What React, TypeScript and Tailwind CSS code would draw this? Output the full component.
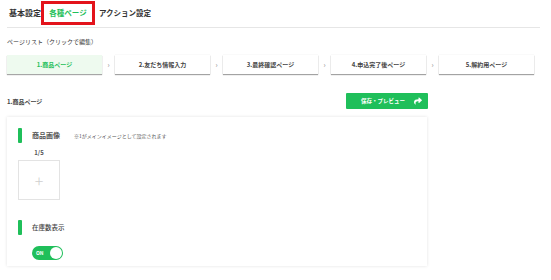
import { FaShare } from "react-icons/fa";

const steps = ["1.商品ページ", "2.友だち情報入力", "3.最終確認ページ", "4.申込完了後ページ", "5.解約用ページ"];

const SectionTitle = ({ title, note, bold }: { title: string; note?: string; bold?: boolean }) => (
  <div className="flex items-center h-[15px]">
    <div className="w-[4px] h-[15px] rounded-[1px] bg-[#1fbf5a]" />
    <span className={bold ? "ml-[10px] text-[7px] font-bold text-[#555]" : "ml-[10px] text-[6.5px] font-medium text-[#444]"}>
      {title}
    </span>
    {note && <span className="ml-[14px] text-[5px] text-[#555]">{note}</span>}
  </div>
);

export default function App() {
  return (
    <div
      className="w-[551px] h-[280px] overflow-hidden bg-white text-[#333]"
      style={{ fontFamily: '"Noto Sans CJK JP", "Noto Sans", sans-serif' }}
    >
      <div className="pl-[7px] pr-[11px]">
        {/* Tabs */}
        <div className="flex items-start h-[28px] pt-[1px] border-b border-[#e6e6e6]">
          <div className="w-[34px] pl-[2px] h-[24px] flex items-center text-[8px] font-semibold text-[#333] leading-none">
            基本設定
          </div>
          <div className="w-[54px] h-[24px] border-[3px] border-[#e3131b] flex items-center justify-center text-[7.5px] font-bold text-[#1fbf5a] leading-none">
            各種ページ
          </div>
          <div className="ml-[4px] h-[24px] flex items-center text-[7.5px] font-semibold text-[#333] leading-none">
            アクション設定
          </div>
        </div>

        {/* Page list */}
        <div className="mt-[10px] text-[6px] leading-[8px] text-[#333]">ページリスト（クリックで編集）</div>
        <div className="mt-[9px] flex items-center">
          {steps.map((s, i) => (
            <div key={s} className="flex items-center">
              {i > 0 && <div className="w-[13px] text-center text-[7px] text-[#888]">›</div>}
              <div
                className={
                  i === 0
                    ? "w-[95px] h-[19px] flex items-center justify-center text-[6px] font-semibold text-[#1fbf5a] bg-[#eefaef] shadow-[0_1px_1px_rgba(0,0,0,0.35)]"
                    : "w-[95px] h-[19px] flex items-center justify-center text-[6px] font-semibold text-[#444] bg-white shadow-[0_1px_1px_rgba(0,0,0,0.35),0_0_1px_rgba(0,0,0,0.12)]"
                }
              >
                {s}
              </div>
            </div>
          ))}
        </div>

        {/* Page header + button */}
        <div className="mt-[19px] w-[421px] flex items-center justify-between">
          <span className="text-[6px] font-semibold text-[#444]">1.商品ページ</span>
          <button className="w-[82px] h-[16px] bg-[#1fbf5a] rounded-[1px] flex items-center justify-end pr-[6px] text-white">
            <span className="text-[5.5px] font-bold mr-[9px]">保存・プレビュー</span>
            <FaShare className="w-[8px] h-[8px]" />
          </button>
        </div>

        {/* Card */}
        <div className="mt-[8px] w-[420px] h-[149px] bg-white shadow-[0_0_3px_rgba(0,0,0,0.12)] pl-[11px] pt-[11px]">
          <SectionTitle title="商品画像" note="※1がメインイメージとして設定されます" bold />
          <div className="w-[42px] mt-[6px] text-center text-[6px] font-bold text-[#555] leading-[8px]">1/5</div>
          <div className="mt-[3px] w-[42px] h-[40px] border border-[#e3e3e3] flex items-center justify-center text-[16px] font-light text-[#cfcfcf]">
            +
          </div>
          <div className="mt-[20px]">
            <SectionTitle title="在庫数表示" />
          </div>
          <div className="mt-[11px] ml-[14px] w-[31px] h-[14px] rounded-full bg-[#1fbf5a] flex items-center justify-between pl-[4px] pr-[1px]">
            <span className="text-[5px] font-bold text-white">ON</span>
            <div className="w-[12px] h-[12px] rounded-full bg-white" />
          </div>
        </div>
      </div>
    </div>
  );
}
